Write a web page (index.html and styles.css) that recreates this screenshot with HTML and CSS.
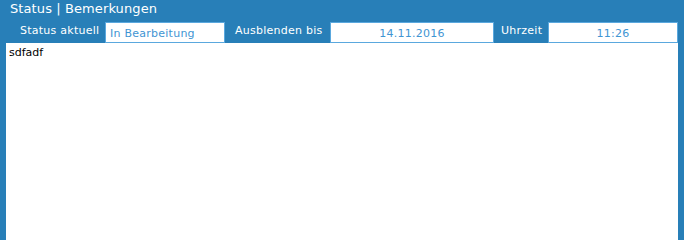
FILE: index.html
```html
<!DOCTYPE html>
<html lang="de">
<head>
<meta charset="utf-8">
<title>Status | Bemerkungen</title>
<link rel="stylesheet" href="styles.css">
</head>
<body>
<div class="panel">
  <div class="title">Status | Bemerkungen</div>
  <div class="toolbar">
    <span class="label label-status">Status aktuell</span>
    <div class="field field-status">In Bearbeitung</div>
    <span class="label label-hide">Ausblenden bis</span>
    <div class="field field-date">14.11.2016</div>
    <span class="label label-time">Uhrzeit</span>
    <div class="field field-time">11:26</div>
  </div>
  <div class="notes">sdfadf</div>
</div>
</body>
</html>
```
FILE: styles.css
```css
html, body {
  margin: 0;
  padding: 0;
  height: 100%;
  background: #287fb8;
  overflow: hidden;
}
.panel {
  display: flex;
  flex-direction: column;
  height: 100%;
  padding: 0 6px;
  box-sizing: border-box;
  font-family: "DejaVu Sans", Verdana, sans-serif;
}
.title {
  flex: none;
  height: 22px;
  padding-left: 4px;
  color: #ffffff;
  font-size: 13px;
  line-height: 17px;
  letter-spacing: 0.1px;
  box-sizing: border-box;
}
.toolbar {
  flex: none;
  display: flex;
  align-items: flex-start;
  height: 21px;
  font-size: 11px;
  letter-spacing: 0.25px;
}
.label {
  flex: none;
  box-sizing: border-box;
  color: #ffffff;
  line-height: 13px;
  padding-top: 2px;
  white-space: nowrap;
}
.label-status { width: 99px; padding-left: 14px; }
.label-hide { width: 105px; padding-left: 10px; }
.label-time { width: 54px; padding-left: 7px; }
.field {
  flex: none;
  height: 21px;
  box-sizing: border-box;
  background: #ffffff;
  border: 1px solid #5aa8de;
  color: #3f95d3;
  line-height: 20px;
  padding-top: 1px;
  white-space: nowrap;
}
.field-status { width: 120px; padding-left: 4px; }
.field-date { width: 164px; text-align: center; }
.field-time { width: 130px; text-align: center; }
.notes {
  flex: 1;
  background: #ffffff;
  color: #000000;
  font-size: 11px;
  line-height: 14px;
  padding: 3px 3px;
}
```
